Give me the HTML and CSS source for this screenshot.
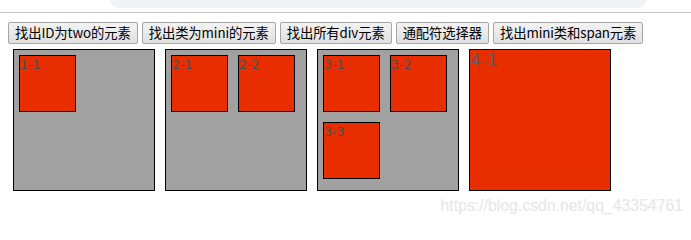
FILE: index.html
```html
<!DOCTYPE html>
<html lang="zh">
<head>
<meta charset="utf-8">
<title>jQuery 选择器</title>
<link rel="stylesheet" href="styles.css">
</head>
<body>
<div class="chrome">
  <div class="address"></div>
</div>
<main class="page">
  <div class="toolbar">
    <button class="btn">找出ID为two的元素</button>
    <button class="btn">找出类为mini的元素</button>
    <button class="btn">找出所有div元素</button>
    <button class="btn">通配符选择器</button>
    <button class="btn">找出mini类和span元素</button>
  </div>
  <div class="boxes">
    <div class="box">
      <div class="mini">1-1</div>
    </div>
    <div class="box">
      <div class="mini">2-1</div>
      <div class="mini">2-2</div>
    </div>
    <div class="box">
      <div class="mini">3-1</div>
      <div class="mini">3-2</div>
      <div class="mini">3-3</div>
    </div>
    <div class="box box-red">4-1</div>
  </div>
</main>
<div class="watermark">https://blog.csdn.net/qq_43354761</div>
</body>
</html>
```
FILE: styles.css
```css
html, body {
  margin: 0;
  padding: 0;
  background: #fff;
}

body {
  position: relative;
  width: 691px;
  height: 224px;
  overflow: hidden;
}

.chrome {
  height: 12px;
  border-bottom: 1px solid #c4c4c4;
  background: #fff;
}

.address {
  margin-left: 110px;
  width: 536px;
  height: 8px;
  background: #f1f3f4;
  border-radius: 0 0 8px 8px;
}

.page {
  padding: 9px 8px 0 8px;
}

.toolbar {
  display: flex;
  gap: 4px;
  height: 22px;
}

.btn {
  height: 22px;
  padding: 0 6px;
  margin: 0;
  border: 1px solid #a6a6a6;
  border-radius: 2px;
  background: linear-gradient(#f3f3f3, #e0e0e0);
  font-family: "Noto Sans CJK SC", "Microsoft YaHei", sans-serif;
  font-size: 13.33px;
  letter-spacing: -0.1px;
  line-height: 20px;
  color: #000;
  white-space: nowrap;
}

.boxes {
  display: flex;
  align-items: flex-start;
}

.box {
  box-sizing: content-box;
  width: 140px;
  height: 140px;
  margin: 5px;
  border: 1px solid #000;
  background: #a1a1a1;
  display: flex;
  flex-wrap: wrap;
  align-content: flex-start;
  font-family: "DejaVu Sans", Verdana, sans-serif;
  font-size: 17px;
  line-height: 20px;
  color: #5c5c5c;
}

.mini {
  box-sizing: content-box;
  width: 55px;
  height: 54px;
  padding-top: 1px;
  margin: 5px;
  border: 1px solid #000;
  background: #e82e00;
  font-size: 12.5px;
  line-height: 15px;
  color: #4e4e4e;
}

.box-red {
  background: #e82e00;
  display: block;
}

.watermark {
  position: absolute;
  right: 8px;
  top: 197px;
  font-family: "Liberation Sans", Arial, sans-serif;
  font-size: 15.8px;
  color: #e8e8e8;
  text-shadow: 0 0 1px #f4f4f4;
}
```
